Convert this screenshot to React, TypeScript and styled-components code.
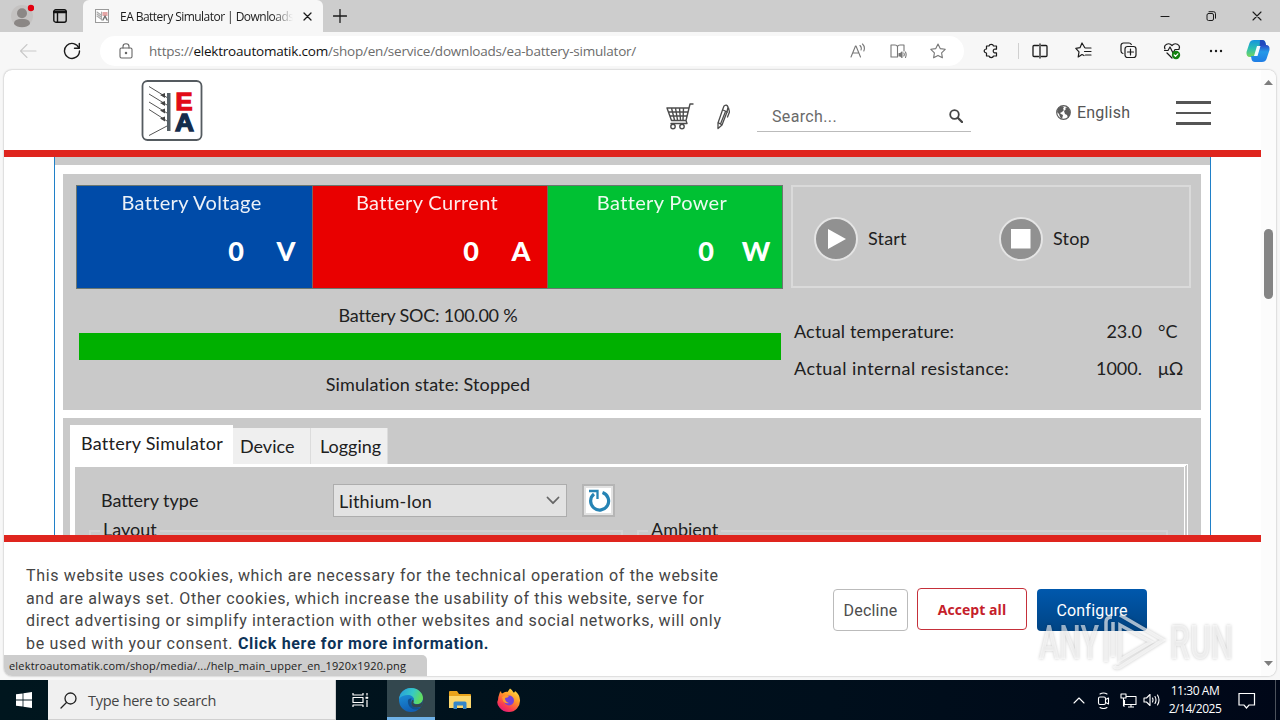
import React from 'react';
import styled, { createGlobalStyle, css } from 'styled-components';

export default function App() {
  return (
    <>
      <GlobalStyle />
      <Desktop>
        <TitleBar />
        <Toolbar />
        <Viewport>
          <Page>
            <SiteHeader />
            <Article />
            <CookieBar />
          </Page>
          <Scrollbar />
          <StatusBubble>
            <Text size={11} spacing={0.18}>
              elektroautomatik.com/shop/media/.../help_main_upper_en_1920x1920.png
            </Text>
          </StatusBubble>
        </Viewport>
        <Taskbar />
        <Watermark />
      </Desktop>
    </>
  );
}

type IconProps = {
  w: number;
  h?: number;
  color?: string;
  line?: number;
  children: React.ReactNode;
};

function Icon({ w, h = w, color = '#1b1b1b', line = 1.1, children }: IconProps) {
  return (
    <Svg
      width={w}
      height={h}
      viewBox={`0 0 ${w} ${h}`}
      fill="none"
      stroke={color}
      strokeWidth={line}
      strokeLinecap="round"
      strokeLinejoin="round"
    >
      {children}
    </Svg>
  );
}

/* ---------- Browser window ---------- */

function TitleBar() {
  return (
    <StyledTitleBar>
      <Slot width={44}>
        <Icon w={24} color="none">
          <circle cx="12" cy="12" r="11" fill="#c4c2c1" />
          <circle cx="12" cy="9.200" r="5" fill="#8b8785" />
          <path d="M4 20c0-3.500 2-5 8-5s8 1.500 8 5c-2 2.300-4.500 3.300-8 3.300S6 22.300 4 20z" fill="#8b8785" />
          <circle cx="21" cy="4" r="3.200" fill="#e3000f" />
        </Icon>
      </Slot>
      <Slot width={32}>
        <Icon w={14} color="#111" line={1.4}>
          <rect x="0.8" y="0.800" width="12.400" height="12.400" rx="2" />
          <path d="M1 3h12" strokeWidth="2.500" />
          <path d="M4.500 4v9" />
        </Icon>
      </Slot>
      <Tab>
        <Icon w={14} color="none">
          <rect x="0.5" y="0.500" width="13" height="13" fill="#fff" stroke="#9a9a9a" />
          <path d="M2 3l4 3M2 5l4 3M2 7l4 3M6.500 3v8" stroke="#aaa" />
          <path d="M8 4h4M8 6h4" stroke="#d88" strokeWidth="1.500" />
          <path d="M8 11l2-4 2 4" stroke="#777" strokeWidth="1.500" />
        </Icon>
        <TabTitle>
          <Text size={12} spacing={-0.54}>
            EA Battery Simulator | Downloads
          </Text>
        </TabTitle>
        <Icon w={9} line={1.300}>
          <path d="M1 1l7 7M8 1l-7 7" />
        </Icon>
      </Tab>
      <Slot width={34}>
        <Icon w={14} line={1.300}>
          <path d="M7 0.500v13M0.500 7h13" />
        </Icon>
      </Slot>
      <WindowButtons>
        <Slot width={46}>
          <Icon w={10}>
            <path d="M1 5.500h8" />
          </Icon>
        </Slot>
        <Slot width={46}>
          <Icon w={10} line={1}>
            <rect x="1" y="2.500" width="6.500" height="7" rx="1.500" />
            <path d="M3 0.700h4.500a2 2 0 0 1 2 2v4.500" />
          </Icon>
        </Slot>
        <Slot width={46}>
          <Icon w={10}>
            <path d="M1 1l8 8M9 1l-8 8" />
          </Icon>
        </Slot>
      </WindowButtons>
    </StyledTitleBar>
  );
}

function Toolbar() {
  return (
    <StyledToolbar>
      <Slot width={44}>
        <Icon w={18} color="#c9c9c9">
          <path d="M1.500 9H17M8 2.500L1.500 9L8 15.500" />
        </Icon>
      </Slot>
      <Slot width={44}>
        <Icon w={18} line={1.400}>
          <path d="M16 6.200A7.500 7.500 0 1 0 16.500 9" />
          <path d="M16.300 1.500V6.200H11.500" />
        </Icon>
      </Slot>
      <AddressBar>
        <Slot width={52}>
          <Icon w={14} h={16} color="#666">
            <rect x="1" y="5" width="12" height="10" rx="1.500" />
            <path d="M4 5V3.500a3 2.700 0 0 1 6 0V5" />
            <circle cx="7" cy="10" r="0.700" fill="#666" />
          </Icon>
        </Slot>
        <Url>
          https://<b>elektroautomatik.com</b>/shop/en/service/downloads/ea-battery-simulator/
        </Url>
        <Slot width={40}>
          <Icon w={16} color="#777">
            <path d="M1 14L5.500 3h0.500L10.500 14M2.700 10h6" />
            <path d="M10 2.500q2 2 1 4.500M12.500 1q3 3 1.300 7" />
          </Icon>
        </Slot>
        <Slot width={40}>
          <Icon w={18} h={16} color="#777">
            <path d="M8 14H2V2h4q2 0 2.500 1.500V14M8.500 3.500Q9 2 11 2h4v6" />
            <path d="M10 10.500h1.500L13 9v5.500l-1.500-1.500H10z" fill="#777" />
            <path d="M14.800 10q1 1.500 0 3M16.500 9q1.300 2.500 0 5.500" />
          </Icon>
        </Slot>
        <Slot width={40}>
          <Icon w={16} color="#777">
            <path d="M8 1l2.200 4.600 5 .7-3.600 3.500.8 5L8 12.400l-4.400 2.400.8-5L.8 6.300l5-.7z" />
          </Icon>
        </Slot>
      </AddressBar>
      <Slot width={54}>
        <Icon w={16} line={1.200}>
          <path d="M3.500 3H6a2.300 2 0 0 1 4.500 0H13.500v3.200c-2-.5-3.300.300-3.300 1.800s1.300 2.300 3.300 1.800V13h-3a2.300 2 0 0 1-4.500 0H3.500v-3a2.300 2 0 0 1 0-4z" />
        </Icon>
      </Slot>
      <Divider />
      <Slot width={41}>
        <Icon w={16} line={1.300}>
          <path d="M6.500 2.500H2a1 1 0 0 0-1 1v9a1 1 0 0 0 1 1h4.500M9.500 2.500H14a1 1 0 0 1 1 1v9a1 1 0 0 1-1 1H9.500M8 1v14" />
        </Icon>
      </Slot>
      <Slot width={46}>
        <Icon w={17} line={1.200}>
          <path d="M9.800 5.700L7 1 5 5.700.8 6.300l3.200 3.500-.8 5.200L7 12.500l2 1M10.500 6h5.500M9.500 9.500H16M10.500 13H16" />
        </Icon>
      </Slot>
      <Slot width={44}>
        <Icon w={17} line={1.200}>
          <path d="M3 11.500A2.500 2.500 0 0 1 1 9V3.500A2.500 2.500 0 0 1 3.500 1H9a2.500 2.500 0 0 1 2.300 1.500" />
          <rect x="5" y="4.500" width="11" height="11" rx="2.500" />
          <path d="M10.500 7v6M7.500 10h6" />
        </Icon>
      </Slot>
      <Slot width={44}>
        <Icon w={18} line={1.200}>
          <path d="M2 7C0 2.500 6 0 9 3.500 12 0 18 2.500 16 7M1.500 8.500H5L7 5l3 6 2-3.500h4M4 11l5 5" />
          <circle cx="13" cy="13" r="4.200" fill="#13810f" stroke="none" />
          <path d="M11.200 13l1.300 1.300 2.300-2.500" stroke="#fff" />
        </Icon>
      </Slot>
      <Slot width={43}>
        <Icon w={14} h={4} color="none">
          <circle cx="2" cy="2" r="1.200" fill="#1b1b1b" />
          <circle cx="7" cy="2" r="1.200" fill="#1b1b1b" />
          <circle cx="12" cy="2" r="1.200" fill="#1b1b1b" />
        </Icon>
      </Slot>
      <Slot width={42}>
        <Icon w={24} color="none">
          <defs>
            <linearGradient id="copilotLeft" x1="0" y1="0" x2="0" y2="1">
              <stop offset="0" stopColor="#1593df" />
              <stop offset="0.500" stopColor="#2bbfb2" />
              <stop offset="1" stopColor="#79d65c" />
            </linearGradient>
            <linearGradient id="copilotRight" x1="0" y1="0" x2="0" y2="1">
              <stop offset="0" stopColor="#2a48c4" />
              <stop offset="0.400" stopColor="#2499e8" />
              <stop offset="1" stopColor="#1f7de5" />
            </linearGradient>
          </defs>
          <path d="M8 1h8q3 0 3.500 3l.8 3H17q-3 0-4 3.500L11.500 15q-.8 3-3.500 3H4q-4 0-3.500-5L3.500 4Q4.500 1 8 1z" fill="url(#copilotLeft)" />
          <path d="M14 1h2q3 0 3.500 3l.8 3H17q-2 0-3.500 2z" fill="#2148bd" />
          <path d="M16 23H9q-3 0-3.500-3L5 17h3q3 0 4-3.500L13.500 9q.8-3 3.500-3h3q4 0 3.500 5l-3 9Q19.500 23 16 23z" fill="url(#copilotRight)" />
          <path d="M11 7h3.500l-3 10H8z" fill="#f4fbff" />
        </Icon>
      </Slot>
    </StyledToolbar>
  );
}

function Scrollbar() {
  return (
    <ScrollTrack>
      <Icon w={9} h={5} color="none">
        <path d="M0 5L4.500 0 9 5z" fill="#7d7d7d" />
      </Icon>
      <ScrollThumb />
      <Icon w={9} h={5} color="none">
        <path d="M0 0l4.500 5L9 0z" fill="#7d7d7d" />
      </Icon>
    </ScrollTrack>
  );
}

/* ---------- Web page ---------- */

function SiteHeader() {
  return (
    <StyledHeader>
      <Logo width="62" height="62" viewBox="0 0 62 62">
        <rect x="1.500" y="1" width="59" height="59" rx="5" fill="#fff" stroke="#555b60" strokeWidth="1.800" />
        <path d="M8 6.500l18 11M8 14l18 11M8 22l18 11M8 29.500L26 41M8 55.500L26 46" stroke="#555" fill="none" />
        <path d="M19 15l5-2v5zM19 23l5-2v5zM19 30.500l5-2v5zM19 38.500l5-2v5z" fill="#444" />
        <rect x="26" y="13" width="3.500" height="38" fill="#566067" />
        <text x="34.500" y="29.500" textLength="17" lengthAdjust="spacingAndGlyphs" fill="#e20a17" stroke="#e20a17">
          E
        </text>
        <text x="34" y="50.500" textLength="19" lengthAdjust="spacingAndGlyphs" fill="#142c4c" stroke="#142c4c">
          A
        </text>
      </Logo>
      <HeaderTools>
        <Icon w={28} h={27} color="#4d4d4d" line={1.400}>
          <path d="M27 1h-3l-4 16.500H5.500L1 5h21.500M5.500 5l3 12M9.500 5l2 12M13.500 5l1 12M17.500 5L17 17M2.500 9h19M4 13h17M20 17.500l1 3H5" />
          <circle cx="7" cy="23.500" r="2.200" />
          <circle cx="16" cy="23.500" r="2.200" />
        </Icon>
        <Icon w={14} h={26} color="#4d4d4d" line={1.300}>
          <path d="M8 2q3-2 4 1l-1 5-5 13-4 3.500V19L6.500 6zM7 6l4.500 2M2 18.500l4 2.500M9.500 7.500L4.500 20M12.500 4l1 4-2 5" />
        </Icon>
        <SearchField>
          <Text size={16} color="#6a6a6a" family="Roboto" spacing={0.35}>
            Search...
          </Text>
          <Icon w={14} color="#444" line={1.800}>
            <circle cx="5.500" cy="5.500" r="4.300" />
            <path d="M9 9l4 4" strokeWidth="2.300" />
          </Icon>
        </SearchField>
      </HeaderTools>
      <Language>
        <Icon w={15} color="none">
          <circle cx="7.500" cy="7.500" r="6.800" fill="#fff" stroke="#5c5c5c" strokeWidth="1.200" />
          <path d="M2 3l4-2 2 1-1 2 1 1-2 2-2 1 1 1 2 1-1 4-2-2-1-3-2-2zM9 3l3-1 2 4v4l-2 3-1-3-2-1-1-3 2-2z" fill="#5c5c5c" />
        </Icon>
        <Text size={16} color="#555" family="Roboto" spacing={0.2}>
          English
        </Text>
      </Language>
      <Burger>
        <span />
        <span />
        <span />
      </Burger>
    </StyledHeader>
  );
}

function Article() {
  return (
    <StyledArticle>
      <AppWindow>
        <MenuStrip />
        <Panel>
          <PanelGrid>
            <div>
              <Meters>
                <MeterBox color="#004ba8" label="Battery Voltage" unit="V" />
                <MeterBox color="#e90000" label="Battery Current" unit="A" />
                <MeterBox color="#00c133" label="Battery Power" unit="W" />
              </Meters>
              <SocLabel>Battery SOC: 100.00 %</SocLabel>
              <SocBar />
              <StateLabel>Simulation state: Stopped</StateLabel>
            </div>
            <div>
              <Controls>
                <Control>
                  <Icon w={44} color="#e4e4e4" line={2}>
                    <circle cx="22" cy="22" r="21" fill="#919191" />
                    <path d="M14 12v20l18-10z" fill="#fff" stroke="none" />
                  </Icon>
                  <ControlLabel>Start</ControlLabel>
                </Control>
                <Control>
                  <Icon w={44} color="#e4e4e4" line={2}>
                    <circle cx="22" cy="22" r="21" fill="#919191" />
                    <path d="M12 12h19.500v19.500H12z" fill="#fff" stroke="none" />
                  </Icon>
                  <ControlLabel>Stop</ControlLabel>
                </Control>
              </Controls>
              <Readings>
                <Reading $spacing={0.17}>
                  <span>Actual temperature:</span>
                  <span>23.0</span>
                  <span>°C</span>
                </Reading>
                <Reading $spacing={0.46}>
                  <span>Actual internal resistance:</span>
                  <span>1000.</span>
                  <span>μΩ</span>
                </Reading>
              </Readings>
            </div>
          </PanelGrid>
        </Panel>
        <TabPanel>
          <SimTabs>
            <SimTab $active $width={163}>
              Battery Simulator
            </SimTab>
            <SimTab $width={78}>Device</SimTab>
            <SimTab $width={77}>Logging</SimTab>
          </SimTabs>
          <TabBody>
            <TypeRow>
              <span>Battery type</span>
              <Select>
                <span>Lithium-Ion</span>
                <Icon w={14} h={9} color="#666" line={1.800}>
                  <path d="M1.500 1.500L7 7.200l5.500-5.700" />
                </Icon>
              </Select>
              <ReloadButton>
                <Icon w={26} color="#2583b4" line={3.200}>
                  <path d="M8 6A9 9 0 1 0 16.500 4.500" strokeLinecap="butt" />
                  <path d="M3 3h8.500v8" strokeWidth="2.300" strokeLinecap="butt" strokeLinejoin="miter" />
                </Icon>
              </ReloadButton>
            </TypeRow>
            <Groups>
              <Group $width={534}>
                <legend>Layout</legend>
              </Group>
              <Group $width={531}>
                <legend>Ambient</legend>
              </Group>
            </Groups>
          </TabBody>
        </TabPanel>
      </AppWindow>
    </StyledArticle>
  );
}

function MeterBox({ color, label, unit }: { color: string; label: string; unit: string }) {
  return (
    <Meter $color={color}>
      <MeterLabel>{label}</MeterLabel>
      <MeterValue>
        <span>0</span>
        <span>{unit}</span>
      </MeterValue>
    </Meter>
  );
}

function CookieBar() {
  return (
    <StyledCookieBar>
      <CookieText>
        This website uses cookies, which are necessary for the technical operation of the website
        <br />
        and are always set. Other cookies, which increase the usability of this website, serve for
        <br />
        direct advertising or simplify interaction with other websites and social networks, will only
        <br />
        be used with your consent. <a>Click here for more information.</a>
      </CookieText>
      <CookieActions>
        <CookieButton $width={75}>Decline</CookieButton>
        <CookieButton $width={110} $variant="accept">
          Accept all
        </CookieButton>
        <CookieButton $width={110} $variant="primary">
          Configure
        </CookieButton>
      </CookieActions>
    </StyledCookieBar>
  );
}

/* ---------- Windows taskbar ---------- */

function Taskbar() {
  return (
    <StyledTaskbar>
      <Slot width={48}>
        <Icon w={16} color="none">
          <path d="M0 2.300l6.600-.9v6.200H0zM7.400 1.300L16 0v7.600H7.400zM0 8.400h6.600v6.200L0 13.700zM7.400 8.400H16V16l-8.600-1.300z" fill="#fff" />
        </Icon>
      </Slot>
      <TaskSearch>
        <Icon w={17} color="#222" line={1.300}>
          <circle cx="10.500" cy="6.500" r="5.500" />
          <path d="M6.500 10.500L1 16" />
        </Icon>
        <Text size={14.500} color="#444" spacing={-0.28}>
          Type here to search
        </Text>
      </TaskSearch>
      <Slot width={49}>
        <Icon w={17} h={16} color="#fff" line={1.200}>
          <path d="M1 1v2h10V1M1 15v-2h10v2M1 5.500h10v5H1zM15 1v2.500M15 8v7" strokeLinecap="butt" />
          <path d="M14 5h2v1.500h-2z" fill="#fff" strokeWidth="0.500" />
        </Icon>
      </Slot>
      <TaskApp $active>
        <Icon w={24} color="none">
          <defs>
            <linearGradient id="edgeTop" x1="0" y1="0" x2="1" y2="0.300">
              <stop offset="0" stopColor="#2598dd" />
              <stop offset="0.600" stopColor="#36c9c6" />
              <stop offset="1" stopColor="#60dc61" />
            </linearGradient>
            <linearGradient id="edgeBody" x1="0" y1="0" x2="0.300" y2="1">
              <stop offset="0" stopColor="#1f9de0" />
              <stop offset="1" stopColor="#1160b5" />
            </linearGradient>
          </defs>
          <circle cx="12" cy="12" r="12" fill="url(#edgeBody)" />
          <path d="M0 11C1 4 6 0 12 0c7 0 12 5 12 10 0 4-3 6-6 6-2 0-4-.6-4-1.500 0-.7 1-1 1-3C15 9 12 7 9 7c-4 0-7 1-9 4z" fill="url(#edgeTop)" />
          <path d="M9 12c-1 5 3 9.500 7.500 9.500 2 0 3.500-.5 5.500-2-1 .3-3 .3-5 0-4-.5-6-4-5-7.500.4-1 1.500-1.500 2.500-1-2-1-5-.5-5.500 1z" fill="#12508e" />
          <path d="M14.500 14.500c-.5 1 1 1.800 3.500 1.800 3 0 5.200-1.500 6-4.500-.2 3-.7 5-2 7-3 1-8 1.500-9.500-2-.7-2 0-4 1-5 1 0 1.500.8 1 2.700z" fill="#33474e" />
        </Icon>
      </TaskApp>
      <TaskApp>
        <Icon w={22} h={19} color="none">
          <path d="M0 1q0-1 1-1h7l2 3h11q1 0 1 1v4H0z" fill="#e8a31c" />
          <path d="M0 5h22v12H0z" fill="#fcd76d" />
          <path d="M4.500 18v-6q0-1.500 1.500-1.500h10q1.500 0 1.500 1.500v6h-3.500v-3.500h-6V18z" fill="#3586c9" />
        </Icon>
      </TaskApp>
      <TaskApp>
        <Icon w={24} color="none">
          <defs>
            <linearGradient id="fox" x1="0.800" y1="0" x2="0.200" y2="1">
              <stop offset="0" stopColor="#ffe443" />
              <stop offset="0.400" stopColor="#ff9428" />
              <stop offset="0.750" stopColor="#fb3a50" />
              <stop offset="1" stopColor="#dd1680" />
            </linearGradient>
          </defs>
          <path d="M2 7q.5-3 2-4 0 1.500 1 2.500L8 4q2-.5 2.500 0L13 0.500q2 1 3.500 4Q18 4.500 18 3q4.500 3 5 9 .3 5-3 8.500T12 24q-6 0-9.500-4.500T1 12q0-3 1-5z" fill="url(#fox)" />
          <circle cx="12" cy="12.500" r="5" fill="#7542d8" />
          <path d="M5 9q4-3 7-1-1 2-4 2 0 4 4 5-4 1-6-2z" fill="#ff9b2c" />
        </Icon>
      </TaskApp>
      <Tray>
        <Slot width={24}>
          <Icon w={12} h={7} color="#fff">
            <path d="M1 6l5-5 5 5" />
          </Icon>
        </Slot>
        <Slot width={25}>
          <Icon w={13} h={17} color="#fff">
            <rect x="1.500" y="5" width="7" height="7.500" rx="1.500" />
            <path d="M8.500 7.500l3-1.500v6l-3-1.500M3 2q3.500-2 7 0M3 15.500q3.500 2 7 0" />
          </Icon>
        </Slot>
        <Slot width={24}>
          <Icon w={17} h={15} color="#fff">
            <path d="M6 3.500h10v8H4.500V7M8 14h6M11 11.500V14M1 1h5v4H1zM3.500 5v8H5" strokeLinecap="butt" />
          </Icon>
        </Slot>
        <Slot width={23}>
          <Icon w={17} h={14} color="#fff">
            <path d="M1 5h2.500L7 1.500v11L3.500 9H1zM9.500 5q1 2 0 4M12 3.500q2 3.500 0 7M14.500 2q3 5 0 10" />
          </Icon>
        </Slot>
        <Clock>
          <Text size={12} color="#fff" spacing={-0.42}>
            11:30 AM
          </Text>
          <Text size={12} color="#fff" spacing={-0.46}>
            2/14/2025
          </Text>
        </Clock>
        <Slot width={39}>
          <Icon w={18} h={17} color="#fff" line={1.200}>
            <path d="M1 1.500h15.500v11.500H11l-2.500 3-2.500-3H1z" strokeLinejoin="miter" />
          </Icon>
        </Slot>
      </Tray>
    </StyledTaskbar>
  );
}

function Watermark() {
  return (
    <StyledWatermark width="200" height="66" viewBox="0 0 200 66">
      <g fill="#fff" fillOpacity="0.600">
        <text x="3" y="51" textLength="60" lengthAdjust="spacingAndGlyphs">
          ANY
        </text>
        <text x="134" y="51" textLength="63" lengthAdjust="spacingAndGlyphs">
          RUN
        </text>
      </g>
      <g fill="none" stroke="#fff" strokeOpacity="0.650" strokeWidth="3.500">
        <path d="M70 54V14q0-5 6-5M77 49V14" />
        <path d="M84 7l43 25-43 27q-4 2-6-1" />
        <path d="M84 17l31 17-31 18z" />
      </g>
    </StyledWatermark>
  );
}

const GlobalStyle = createGlobalStyle`
  * {
    box-sizing: border-box;
  }

  body {
    margin: 0;
    overflow: hidden;
    font-family: 'Open Sans', sans-serif;
  }
`;

const Svg = styled.svg`
  display: block;
  flex: none;
`;

const Text = styled.span.withConfig({
  shouldForwardProp: (prop) => !['size', 'spacing', 'family', 'color'].includes(prop),
})<{ size: number; spacing?: number; family?: string; color?: string }>`
  color: ${({ color }) => color || '#1b1b1b'};
  font-family: ${({ family }) => family || "'Open Sans'"}, sans-serif;
  font-size: ${({ size }) => size}px;
  letter-spacing: ${({ spacing }) => spacing || 0}px;
  white-space: nowrap;
`;

const Slot = styled.div.withConfig({
  shouldForwardProp: (prop) => prop !== 'width',
})<{ width: number }>`
  display: flex;
  flex: none;
  align-items: center;
  justify-content: center;
  width: ${({ width }) => width}px;
  height: 100%;
`;

const Desktop = styled.div`
  position: relative;
  display: flex;
  flex-direction: column;
  width: 1280px;
  height: 720px;
  overflow: hidden;
  background: #f7f7f7;
`;

const StyledTitleBar = styled.div`
  display: flex;
  flex: none;
  height: 32px;
  background: #cdcdcd;
`;

const Tab = styled.div`
  display: flex;
  align-items: center;
  width: 240px;
  margin-left: 7px;
  padding: 0 11px 0 12px;
  background: #f7f7f7;
  border-radius: 6px 6px 0 0;
`;

const TabTitle = styled.div`
  flex: 1;
  margin: 0 10px 2px 11px;
  overflow: hidden;
  mask-image: linear-gradient(90deg, #000 88%, transparent);
`;

const WindowButtons = styled.div`
  display: flex;
  margin-left: auto;
`;

const StyledToolbar = styled.div`
  display: flex;
  flex: none;
  align-items: center;
  height: 37px;
  padding-left: 6px;
  background: #f7f7f7;
`;

const AddressBar = styled.div`
  display: flex;
  flex: none;
  align-items: center;
  width: 864px;
  height: 30px;
  margin-left: 6px;
  padding-right: 6px;
  background: #fff;
  border-radius: 15px;
`;

const Url = styled.div`
  flex: 1;
  margin-left: -3px;
  color: #6c6c6c;
  font-size: 13.5px;
  letter-spacing: -0.21px;
  white-space: nowrap;

  b {
    color: #111;
    font-weight: 400;
  }
`;

const Divider = styled.div`
  width: 1px;
  height: 16px;
  background: #d0d0d0;
`;

const Viewport = styled.div`
  position: relative;
  display: flex;
  flex: none;
  width: 1272px;
  height: 606px;
  margin: 1px 4px 4px;
  overflow: hidden;
  background: #fff;
  border-radius: 8px;
  box-shadow: 0 0 2px rgba(0, 0, 0, 0.35);
`;

const Page = styled.div`
  width: 1257px;
`;

const ScrollTrack = styled.div`
  display: flex;
  flex-direction: column;
  align-items: center;
  justify-content: space-between;
  width: 15px;
  padding: 10px 0;
  background: #fcfcfc;
`;

const ScrollThumb = styled.div`
  width: 9px;
  height: 70px;
  margin-bottom: 219px;
  background: #858585;
  border-radius: 5px;
`;

const StatusBubble = styled.div`
  position: absolute;
  bottom: 0;
  left: 0;
  display: flex;
  align-items: center;
  width: 423px;
  height: 21px;
  padding: 0 0 1px 5px;
  background: #cdcdcd;
  border-radius: 0 5px 0 0;
`;

const StyledHeader = styled.header`
  display: flex;
  align-items: flex-start;
  height: 87px;
  border-bottom: 7px solid #df251e;
`;

const Logo = styled.svg`
  flex: none;
  margin: 10px 0 0 137px;

  text {
    font-family: 'Liberation Sans', sans-serif;
    font-size: 24px;
    font-weight: 700;
    stroke-width: 1.3px;
  }
`;

const HeaderTools = styled.div`
  display: flex;
  align-items: center;
  margin: 31px 0 0 463px;

  ${Svg} + ${Svg} {
    margin-left: 22px;
  }
`;

const SearchField = styled.div`
  display: flex;
  align-items: center;
  justify-content: space-between;
  width: 214px;
  height: 31px;
  margin-left: 27px;
  padding: 0 8px 0 15px;
  border-bottom: 1px solid #bbb;
`;

const Language = styled.div`
  display: flex;
  gap: 6px;
  align-items: center;
  width: 120px;
  margin: 33px 0 0 85px;
`;

const Burger = styled.div`
  display: grid;
  gap: 8px;
  width: 35px;
  margin-top: 31px;

  span {
    height: 2.6px;
    background: #555;
  }
`;

const StyledArticle = styled.main`
  height: 378px;
  padding: 0 50px;
  overflow: hidden;
`;

const AppWindow = styled.div`
  width: 1157px;
  height: 378px;
  padding: 0 9px 0 8px;
  color: #202020;
  font-family: Lato, sans-serif;
  font-size: 18px;
  border: solid #2080c8;
  border-width: 0 1px;
`;

const MenuStrip = styled.div`
  height: 8px;
  margin: 0 -9px 9px -8px;
  background: #cacaca;
`;

const Panel = styled.section`
  height: 236px;
  padding: 11px 10px 0 13px;
  background: #c9c9c9;
`;

const PanelGrid = styled.div`
  display: grid;
  grid-template-columns: 707px 400px;
  gap: 8px;
`;

const Meters = styled.div`
  display: grid;
  grid-template-columns: repeat(3, 1fr);
  height: 104px;
  border: 1px solid #6b7770;
`;

const Meter = styled.div<{ $color: string }>`
  padding-top: 3px;
  color: #fff;
  background: ${({ $color }) => $color};

  & + & {
    border-left: 1px solid #80605c;
  }
`;

const MeterLabel = styled.div`
  padding-right: 6px;
  font-size: 20px;
  line-height: 26px;
  letter-spacing: 0.35px;
  text-align: center;
  opacity: 0.92;
`;

const MeterValue = styled.div`
  display: flex;
  gap: 16px;
  justify-content: flex-end;
  padding-top: 18px;
  font-size: 27px;
  font-weight: 900;
  line-height: 36px;

  span + span {
    width: 52px;
    text-align: center;
  }
`;

const SocLabel = styled.div`
  margin: 15px 3px 0 0;
  line-height: 22px;
  letter-spacing: -0.22px;
  text-align: center;
`;

const SocBar = styled.div`
  height: 27px;
  margin: 7px 2px 13px 3px;
  background: #00b000;
`;

const StateLabel = styled(SocLabel)`
  margin-top: 0;
  letter-spacing: 0.12px;
`;

const Controls = styled.div`
  display: flex;
  height: 103px;
  padding-left: 21px;
  border: 2px solid #dadada;
`;

const Control = styled.div`
  display: flex;
  gap: 10px;
  align-items: center;
  width: 185px;
  padding-top: 5px;
`;

const ControlLabel = styled.span`
  padding-bottom: 2px;
  letter-spacing: 0.2px;
`;

const Readings = styled.div`
  padding: 25px 0 0 3px;
`;

const Reading = styled.div<{ $spacing: number }>`
  display: grid;
  grid-template-columns: 1fr 90px 49px;
  height: 37px;
  line-height: 37px;

  span:first-child {
    letter-spacing: ${({ $spacing }) => $spacing}px;
  }

  span:nth-child(2) {
    text-align: right;
  }

  span:nth-child(3) {
    padding-left: 16px;
  }
`;

const TabPanel = styled.section`
  height: 130px;
  margin-top: 8px;
  padding: 7px 13px 0 7px;
  background: #c9c9c9;
`;

const SimTabs = styled.div`
  display: flex;
  align-items: flex-end;
  height: 39px;
`;

const SimTab = styled.div<{ $active?: boolean; $width: number }>`
  width: ${({ $width }) => $width}px;
  height: 36px;
  padding-left: 7px;
  line-height: 37px;
  background: #efefef;
  border-right: 1px solid #dcdcdc;

  & + & + & {
    padding-left: 9px;
  }

  ${({ $active }) =>
    $active &&
    css`
      height: 39px;
      padding-left: 11px;
      letter-spacing: 0.25px;
      background: #fff;
      border: 0;
    `}
`;

const TabBody = styled.div`
  height: 90px;
  padding: 17px 0 0 26px;
  border: solid #fff;
  border-width: 3px 5px 0;
  border-right: 4px double #fff;
`;

const TypeRow = styled.div`
  display: flex;
  align-items: center;

  > span {
    width: 232px;
    padding-bottom: 2px;
  }
`;

const Select = styled.div`
  display: flex;
  align-items: center;
  justify-content: space-between;
  width: 234px;
  height: 33px;
  padding: 0 6px 0 5px;
  letter-spacing: 0.2px;
  background: #e2e2e2;
  border: 1px solid #adadad;
`;

const ReloadButton = styled.div`
  display: grid;
  place-items: center;
  width: 33px;
  height: 33px;
  margin-left: 15px;
  background: #fff;
  border: 2px solid #b5b5b5;
  box-shadow: inset 0 0 0 2px #e2e2e2;
`;

const Groups = styled.div`
  display: flex;
  gap: 14px;
  margin-left: -12px;
`;

const Group = styled.fieldset<{ $width: number }>`
  width: ${({ $width }) => $width}px;
  height: 60px;
  margin: 0;
  padding: 0 9px;
  border: 2px solid #d3d3d3;

  legend {
    padding: 0 3px 3px;
    line-height: 24px;
  }
`;

const StyledCookieBar = styled.div`
  display: flex;
  height: 141px;
  padding: 22px 0 0 22px;
  border-top: 7px solid #df251e;
`;

const CookieText = styled.p`
  width: 807px;
  margin: 0;
  padding-top: 1px;
  color: #454545;
  font-family: Roboto, sans-serif;
  font-size: 16px;
  line-height: 22.67px;
  letter-spacing: 0.66px;
  white-space: nowrap;

  a {
    color: #0d3358;
    font-weight: 700;
  }
`;

const CookieActions = styled.div`
  display: flex;
  gap: 10px;
  margin-top: 25px;
`;

const CookieButton = styled.button<{ $width: number; $variant?: 'accept' | 'primary' }>`
  width: ${({ $width }) => $width}px;
  height: 42px;
  padding: 0;
  color: #4d4d4d;
  font-family: Roboto, sans-serif;
  font-size: 16px;
  letter-spacing: 0.2px;
  background: #fff;
  border: 1px solid #bbb;
  border-radius: 4px;

  ${({ $variant }) =>
    $variant === 'accept' &&
    css`
      margin: -1px 0 0 -1px;
      color: #c5202a;
      font-family: 'Open Sans', sans-serif;
      font-size: 14px;
      font-weight: 700;
      letter-spacing: 0.05px;
      border-color: #c5303a;
    `}

  ${({ $variant }) =>
    $variant === 'primary' &&
    css`
      color: #fff;
      background: linear-gradient(#0058ad, #004484);
      border: 0;
    `}
`;

const StyledTaskbar = styled.div`
  display: flex;
  flex: none;
  height: 40px;
  background: linear-gradient(90deg, #00161e, #000f1c 65%, #000718);
`;

const TaskSearch = styled.div`
  display: flex;
  gap: 11px;
  align-items: center;
  width: 288px;
  padding: 1px 0 0 12px;
  background: #f0f0f0;
  border: 1px solid #d0d0d0;
  border-width: 0 1px 1px 0;
`;

const TaskApp = styled.div<{ $active?: boolean }>`
  display: flex;
  align-items: center;
  justify-content: center;
  width: 49px;

  ${({ $active }) =>
    $active &&
    css`
      width: 48px;
      margin-left: 2px;
      background: #33474e;
      box-shadow: inset 0 -3px #6fb2e8;
    `}
`;

const Tray = styled.div`
  display: flex;
  margin-left: auto;
  margin-right: 4px;
  padding-right: 9px;
  border-right: 1px solid #4c525c;
`;

const Clock = styled.div`
  display: flex;
  flex-direction: column;
  align-items: center;
  justify-content: center;
  width: 64px;
  line-height: 18px;
`;

const StyledWatermark = styled.svg`
  position: absolute;
  top: 608px;
  left: 1036px;
  filter: drop-shadow(0 0 1.5px rgba(0, 0, 0, 0.35));

  text {
    font-family: Roboto, sans-serif;
    font-size: 49px;
    font-weight: 500;
  }
`;
